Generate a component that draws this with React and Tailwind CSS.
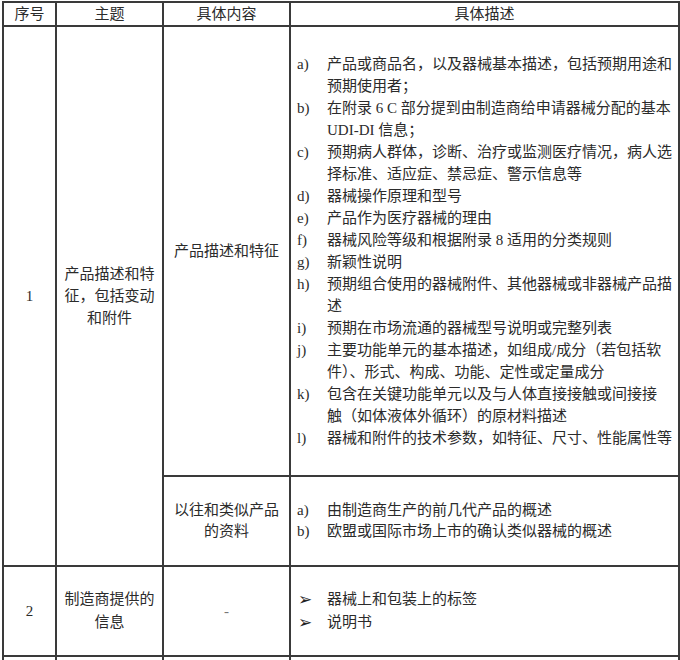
import React from 'react';

const font = { fontFamily: '"Liberation Serif", "Noto Sans CJK SC", serif' };

const productItems = [
	['a)', ['产品或商品名，以及器械基本描述，包括预期用途和', '预期使用者；']],
	['b)', ['在附录 6 C 部分提到由制造商给申请器械分配的基本', 'UDI-DI 信息；']],
	['c)', ['预期病人群体，诊断、治疗或监测医疗情况，病人选', '择标准、适应症、禁忌症、警示信息等']],
	['d)', ['器械操作原理和型号']],
	['e)', ['产品作为医疗器械的理由']],
	['f)', ['器械风险等级和根据附录 8 适用的分类规则']],
	['g)', ['新颖性说明']],
	['h)', ['预期组合使用的器械附件、其他器械或非器械产品描', '述']],
	['i)', ['预期在市场流通的器械型号说明或完整列表']],
	['j)', ['主要功能单元的基本描述，如组成/成分（若包括软', '件）、形式、构成、功能、定性或定量成分']],
	['k)', ['包含在关键功能单元以及与人体直接接触或间接接', '触（如体液体外循环）的原材料描述']],
	['l)', ['器械和附件的技术参数，如特征、尺寸、性能属性等']],
];

const historyItems = [
	['a)', ['由制造商生产的前几代产品的概述']],
	['b)', ['欧盟或国际市场上市的确认类似器械的概述']],
];

const infoItems = [
	['➢', ['器械上和包装上的标签']],
	['➢', ['说明书']],
];

const cell = 'border-2 border-[#3a3a3a] p-0 align-middle text-center';

const ItemList = ({ items, lh = 'leading-[22px]', arrow = false }) => (
	<div className={`pl-[6px] text-left ${lh}`}>
		{items.map(([label, lines], i) => (
			<div key={i} className="flex">
				<div className={`w-[30px] shrink-0 ${arrow ? 'text-[17px] pl-[1px] text-[#222]' : ''}`} style={arrow ? { fontFamily: '"DejaVu Sans", sans-serif' } : undefined}>
					{label}
				</div>
				<div>
					{lines.map((l, j) => (
						<div key={j} className="whitespace-nowrap">{l}</div>
					))}
				</div>
			</div>
		))}
	</div>
);

const App = () => {
	return (
		<div className="w-[680px] h-[660px] overflow-hidden bg-white pt-px pl-[2px]" style={font}>
			<table className="table-fixed border-collapse w-[676px] text-[15px] text-[#2b2b2b]">
				<colgroup>
					<col className="w-[53px]" />
					<col className="w-[107px]" />
					<col className="w-[127px]" />
					<col className="w-[389px]" />
				</colgroup>
				<tbody>
					<tr className="h-[24px]">
						<td className={`${cell} leading-[20px]`}>序号</td>
						<td className={`${cell} leading-[20px]`}>主题</td>
						<td className={`${cell} leading-[20px]`}>具体内容</td>
						<td className={`${cell} leading-[20px]`}>具体描述</td>
					</tr>
					<tr className="h-[450px]">
						<td rowSpan={2} className={cell}>1</td>
						<td rowSpan={2} className={`${cell} leading-[22px]`}>
							产品描述和特
							<br />
							征，包括变动
							<br />
							和附件
						</td>
						<td className={cell}>产品描述和特征</td>
						<td className={cell}>
							<ItemList items={productItems} />
						</td>
					</tr>
					<tr className="h-[90px]">
						<td className={`${cell} leading-[21px]`}>
							以往和类似产品
							<br />
							的资料
						</td>
						<td className={cell}>
							<ItemList items={historyItems} lh="leading-[21px]" />
						</td>
					</tr>
					<tr className="h-[90px]">
						<td className={cell}>2</td>
						<td className={`${cell} leading-[23px]`}>
							制造商提供的
							<br />
							信息
						</td>
						<td className={`${cell} text-[#777]`}>-</td>
						<td className={cell}>
							<ItemList items={infoItems} lh="leading-[23px]" arrow />
						</td>
					</tr>
					<tr className="h-[40px]">
						<td className={cell}></td>
						<td className={cell}></td>
						<td className={cell}></td>
						<td className={cell}></td>
					</tr>
				</tbody>
			</table>
		</div>
	);
};

export default App;
